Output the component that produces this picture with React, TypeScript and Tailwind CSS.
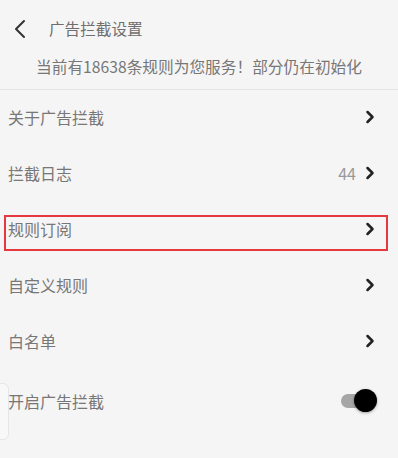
const ROWS = [
  { label: '关于广告拦截' },
  { label: '拦截日志', value: '44' },
  { label: '规则订阅', marked: true },
  { label: '自定义规则' },
  { label: '白名单' },
]

function Chevron() {
  return (
    <svg width="10" height="14" viewBox="0 0 10 14" className="shrink-0">
      <path d="M2.5 2 L7.5 7 L2.5 12" fill="none" stroke="#222" strokeWidth="2.5" strokeLinecap="round" strokeLinejoin="round" />
    </svg>
  )
}

export default function App() {
  return (
    <div
      className="relative h-[458px] w-[398px] overflow-hidden bg-[#f5f5f5]"
      style={{ fontFamily: '"Noto Sans CJK SC", "Noto Sans", sans-serif' }}
    >
      <header className="flex h-[52px] items-center pt-[6px]">
        <svg width="14" height="20" viewBox="0 0 14 20" className="ml-[13px]">
          <path d="M11 2 L3 10 L11 18" fill="none" stroke="#333" strokeWidth="2" strokeLinecap="round" strokeLinejoin="round" />
        </svg>
        <span className="ml-[22px] text-[15.6px] text-[#6e6e6e]">广告拦截设置</span>
      </header>

      <p className="h-[37px] text-center text-[15.7px] leading-[30px] text-[#777]">
        当前有18638条规则为您服务！部分仍在初始化
      </p>

      <div className="h-px bg-[#e4e4e4]" />

      <div>
        {ROWS.map((r) => (
          <div key={r.label} className="relative flex h-[56px] items-center pb-[3px] pl-[8px] pr-[23px]">
            <span className="flex-1 text-[16px] text-[#777]">{r.label}</span>
            {r.value && <span className="mr-[9px] text-[16px] text-[#999]">{r.value}</span>}
            <Chevron />
            {r.marked && (
              <div className="absolute top-[13px] bottom-[7px] left-[4px] right-[10px] border-2 border-[#e5393f]" />
            )}
          </div>
        ))}

        <div className="flex h-[64px] items-center pb-[3px] pl-[8px] pr-[21px]">
          <span className="flex-1 text-[16px] text-[#777]">开启广告拦截</span>
          <div className="relative h-[24px] w-[36px]">
            <div className="absolute left-0 top-[5px] h-[14px] w-[26px] rounded-full bg-[#a6a6a6]" />
            <div className="absolute right-0 top-0 h-[23px] w-[23px] rounded-full bg-black shadow-[0_1px_3px_rgba(0,0,0,0.35)]" />
          </div>
        </div>
      </div>

      <div className="absolute left-[-4px] top-[383px] h-[57px] w-[13px] rounded-r-[6px] border border-[#e6e6e6] bg-[#f8f8f8]" />
    </div>
  )
}
